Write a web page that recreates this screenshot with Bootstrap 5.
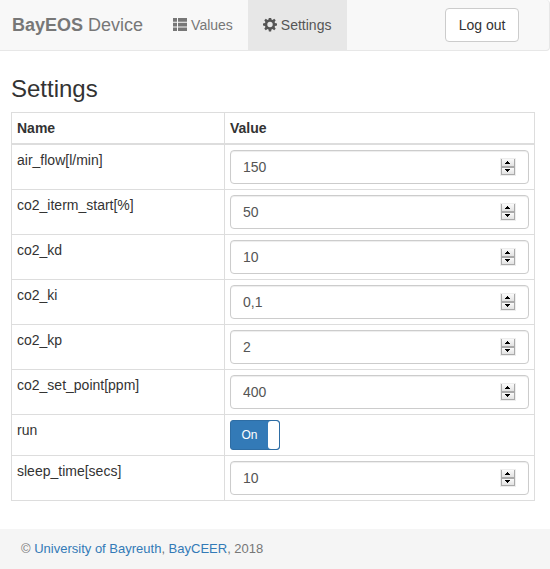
<!DOCTYPE html>
<html lang="en">
<head>
<meta charset="utf-8">
<meta name="viewport" content="width=device-width, initial-scale=1">
<title>BayEOS Device - Settings</title>
<link href="https://cdn.jsdelivr.net/npm/bootstrap@5.3.0/dist/css/bootstrap.min.css" rel="stylesheet">
<style>
body { font-family: "Liberation Sans", Arial, sans-serif; font-size: 14px; line-height: 20px; color: #333; }
.topbar { background: #f8f8f8; border: solid #e7e7e7; border-width: 0 1px 1px 0; border-radius: 0 4px 4px 0; padding: 0 30px 0 12px; min-height: 51px; }
.topbar .navbar-brand { font-size: 18px; line-height: 20px; color: #777; padding: 15px 0; margin: 0 15px 0 0; }
.topbar .nav-link { color: #777; padding: 15px; line-height: 20px; gap: 4px; }
.topbar .nav-link.active { color: #555; background: #e7e7e7; min-width: 99px; }
.btn-logout { font-size: 14px; line-height: 20px; padding: 6px 12px; min-width: 74px; color: #333; background: #fff; border: 1px solid #ccc; border-radius: 4px; }
.content { padding: 25px 15px 0 11px; }
.content h1 { font-size: 24px; line-height: 26px; font-weight: 400; margin: 0 0 10px; }
.settings-table { color: #333; border-color: #ddd; table-layout: fixed; margin-bottom: 28px; }
.settings-table > * > tr > * { padding: 5px; border: 1px solid #ddd; font-weight: 400; vertical-align: top; }
.settings-table > thead > tr > th { font-weight: 700; border-bottom-width: 2px; }
.settings-table .name-col { width: 213px; }
.num-field { height: 34px; padding: 0 12px; border: 1px solid #ccc; border-radius: 4px; box-shadow: inset 0 1px 1px rgba(0,0,0,.075); background: #fff; }
.num-field input { min-width: 0; border: 0; outline: 0; padding: 0; color: #555; background: transparent; line-height: 20px; }
.spinner { width: 16px; height: 18px; border: 1px solid #ededed; background: #aaa; padding: 0 1px 1px; gap: 2px; }
.spinner button { height: 7px; padding: 2px 0 0 3px; border: 0; background: linear-gradient(#fafafa, #e2e2e2); line-height: 0; }
.spinner button + button { height: 6px; padding-top: 1px; }
.spinner svg { width: 5px; height: 3px; }
.run-switch { width: 50px; height: 30px; border: 1px solid #2e6da4; border-radius: 3px; background: #337ab7; color: #fff; font-size: 12px; line-height: 18px; cursor: pointer; overflow: hidden; }
.run-switch .knob { width: 11px; border-radius: 3px; background: #fff; }
.page-footer { background: #f5f5f5; color: #777; font-size: 13px; padding: 10px 21px; }
.page-footer a { color: #337ab7; text-decoration: none; }
</style>
</head>
<body>
<nav class="topbar d-flex align-items-center">
  <a class="navbar-brand" href="#"><strong>BayEOS</strong> Device</a>
  <ul class="nav flex-nowrap">
    <li class="nav-item"><a class="nav-link d-flex align-items-center" href="#values">
      <svg width="14" height="14" viewBox="0 0 14 14" fill="currentColor" aria-hidden="true"><path d="M0 0h4v3.700H0zM5 0h9v3.700H5zM0 4.700h4v3.700H0zM5 4.700h9v3.700H5zM0 9.400h4V13H0zM5 9.400h9V13H5z"/></svg>Values</a></li>
    <li class="nav-item"><a class="nav-link active d-flex align-items-center" aria-current="page" href="#settings">
      <svg width="14" height="14" viewBox="0 0.5 14 14" fill="currentColor" fill-rule="evenodd" aria-hidden="true"><path d="M5.900 0h2.200l.4 2 1 .4 1.700-1.100 1.500 1.500-1.100 1.700.4 1 2 .4v2.200l-2 .4-.4 1 1.100 1.700-1.500 1.500-1.700-1.100-1 .4-.4 2H5.900l-.4-2-1-.4-1.700 1.100-1.500-1.500 1.100-1.700-.4-1-2-.4V5.900l2-.4.4-1L1.300 2.800l1.500-1.500 1.700 1.100 1-.4zM7 4.300a2.700 2.700 0 1 0 0 5.400 2.700 2.700 0 0 0 0-5.400z"/></svg>Settings</a></li>
  </ul>
  <button type="button" class="btn btn-logout ms-auto">Log out</button>
</nav>

<main class="content">
  <h1>Settings</h1>
  <table class="table settings-table">
    <thead><tr><th class="name-col" scope="col">Name</th><th scope="col">Value</th></tr></thead>
    <tbody>
      <tr><td><label for="air">air_flow[l/min]</label></td><td><div class="num-field d-flex align-items-center"><input class="flex-grow-1" id="air" type="text" inputmode="decimal" value="150"><span class="spinner d-flex flex-column"><button type="button" aria-label="Increase" class="d-flex align-items-start"><svg viewBox="0 0 5 3"><path d="M2 0h1v1h1v1h1v1H0V2h1V1h1z"/></svg></button><button type="button" aria-label="Decrease" class="d-flex align-items-start"><svg viewBox="0 0 5 3"><path d="M0 0h5v1H4v1H3v1H2V2H1V1H0z"/></svg></button></span></div></td></tr>
      <tr><td><label for="iterm">co2_iterm_start[%]</label></td><td><div class="num-field d-flex align-items-center"><input class="flex-grow-1" id="iterm" type="text" inputmode="decimal" value="50"><span class="spinner d-flex flex-column"><button type="button" aria-label="Increase" class="d-flex align-items-start"><svg viewBox="0 0 5 3"><path d="M2 0h1v1h1v1h1v1H0V2h1V1h1z"/></svg></button><button type="button" aria-label="Decrease" class="d-flex align-items-start"><svg viewBox="0 0 5 3"><path d="M0 0h5v1H4v1H3v1H2V2H1V1H0z"/></svg></button></span></div></td></tr>
      <tr><td><label for="kd">co2_kd</label></td><td><div class="num-field d-flex align-items-center"><input class="flex-grow-1" id="kd" type="text" inputmode="decimal" value="10"><span class="spinner d-flex flex-column"><button type="button" aria-label="Increase" class="d-flex align-items-start"><svg viewBox="0 0 5 3"><path d="M2 0h1v1h1v1h1v1H0V2h1V1h1z"/></svg></button><button type="button" aria-label="Decrease" class="d-flex align-items-start"><svg viewBox="0 0 5 3"><path d="M0 0h5v1H4v1H3v1H2V2H1V1H0z"/></svg></button></span></div></td></tr>
      <tr><td><label for="ki">co2_ki</label></td><td><div class="num-field d-flex align-items-center"><input class="flex-grow-1" id="ki" type="text" inputmode="decimal" value="0,1"><span class="spinner d-flex flex-column"><button type="button" aria-label="Increase" class="d-flex align-items-start"><svg viewBox="0 0 5 3"><path d="M2 0h1v1h1v1h1v1H0V2h1V1h1z"/></svg></button><button type="button" aria-label="Decrease" class="d-flex align-items-start"><svg viewBox="0 0 5 3"><path d="M0 0h5v1H4v1H3v1H2V2H1V1H0z"/></svg></button></span></div></td></tr>
      <tr><td><label for="kp">co2_kp</label></td><td><div class="num-field d-flex align-items-center"><input class="flex-grow-1" id="kp" type="text" inputmode="decimal" value="2"><span class="spinner d-flex flex-column"><button type="button" aria-label="Increase" class="d-flex align-items-start"><svg viewBox="0 0 5 3"><path d="M2 0h1v1h1v1h1v1H0V2h1V1h1z"/></svg></button><button type="button" aria-label="Decrease" class="d-flex align-items-start"><svg viewBox="0 0 5 3"><path d="M0 0h5v1H4v1H3v1H2V2H1V1H0z"/></svg></button></span></div></td></tr>
      <tr><td><label for="setpoint">co2_set_point[ppm]</label></td><td><div class="num-field d-flex align-items-center"><input class="flex-grow-1" id="setpoint" type="text" inputmode="decimal" value="400"><span class="spinner d-flex flex-column"><button type="button" aria-label="Increase" class="d-flex align-items-start"><svg viewBox="0 0 5 3"><path d="M2 0h1v1h1v1h1v1H0V2h1V1h1z"/></svg></button><button type="button" aria-label="Decrease" class="d-flex align-items-start"><svg viewBox="0 0 5 3"><path d="M0 0h5v1H4v1H3v1H2V2H1V1H0z"/></svg></button></span></div></td></tr>
      <tr><td><label for="run">run</label></td><td><input type="checkbox" class="btn-check" id="run" checked><label class="run-switch d-flex" for="run"><span class="flex-grow-1 d-flex align-items-center justify-content-center">On</span><span class="knob"></span></label></td></tr>
      <tr><td><label for="sleep">sleep_time[secs]</label></td><td><div class="num-field d-flex align-items-center"><input class="flex-grow-1" id="sleep" type="text" inputmode="decimal" value="10"><span class="spinner d-flex flex-column"><button type="button" aria-label="Increase" class="d-flex align-items-start"><svg viewBox="0 0 5 3"><path d="M2 0h1v1h1v1h1v1H0V2h1V1h1z"/></svg></button><button type="button" aria-label="Decrease" class="d-flex align-items-start"><svg viewBox="0 0 5 3"><path d="M0 0h5v1H4v1H3v1H2V2H1V1H0z"/></svg></button></span></div></td></tr>
    </tbody>
  </table>
</main>
<footer class="page-footer">© <a href="#ubt">University of Bayreuth</a>, <a href="#bayceer">BayCEER</a>, 2018</footer>
<script src="https://cdn.jsdelivr.net/npm/bootstrap@5.3.0/dist/js/bootstrap.bundle.min.js"></script>
</body>
</html>
